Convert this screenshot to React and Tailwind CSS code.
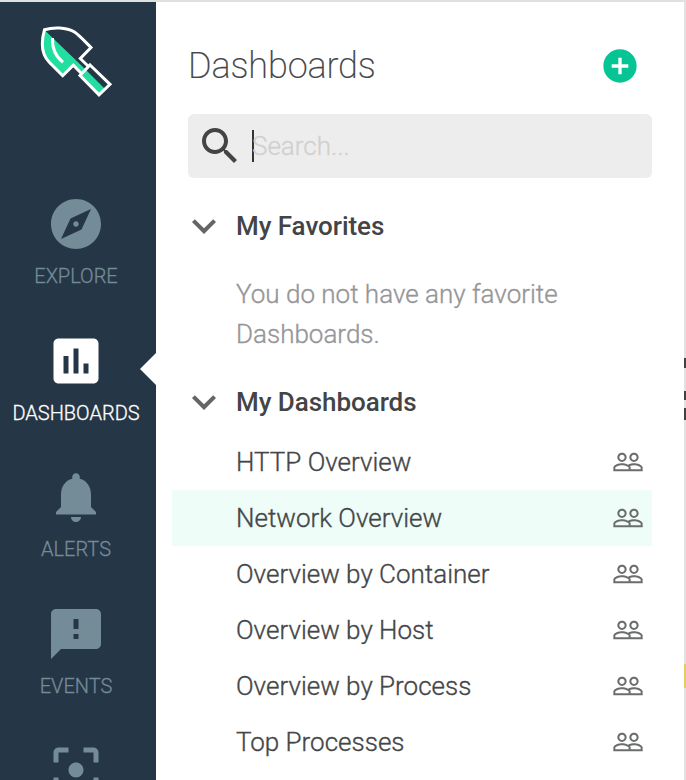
import React from 'react';

const ICONS = {
  explore:
    'M12 10.9c-.61 0-1.1.49-1.1 1.1s.49 1.1 1.1 1.1c.61 0 1.1-.49 1.1-1.1s-.49-1.1-1.1-1.1zM12 2C6.48 2 2 6.48 2 12s4.48 10 10 10 10-4.48 10-10S17.52 2 12 2zm2.19 12.19L6 18l3.81-8.19L18 6l-3.81 8.19z',
  dashboards:
    'M19 3H5c-1.1 0-2 .9-2 2v14c0 1.1.9 2 2 2h14c1.1 0 2-.9 2-2V5c0-1.1-.9-2-2-2zM9 17H7v-7h2v7zm4 0h-2V7h2v10zm4 0h-2v-4h2v4z',
  alerts:
    'M12 22c1.1 0 2-.9 2-2h-4c0 1.1.89 2 2 2zm6-6v-5c0-3.07-1.64-5.64-4.5-6.32V4c0-.83-.67-1.5-1.5-1.5s-1.5.67-1.5 1.5v.68C7.63 5.36 6 7.92 6 11v5l-2 2v1h16v-1l-2-2z',
  events:
    'M20 2H4c-1.1 0-1.99.9-1.99 2L2 22l4-4h14c1.1 0 2-.9 2-2V4c0-1.1-.9-2-2-2zm-7 12h-2v-2h2v2zm0-4h-2V6h2v4z',
  captures:
    'M5 15H3v4c0 1.1.9 2 2 2h4v-2H5v-4zM5 5h4V3H5c-1.1 0-2 .9-2 2v4h2V5zm14-2h-4v2h4v4h2V5c0-1.1-.9-2-2-2zm0 16h-4v2h4c1.1 0 2-.9 2-2v-4h-2v4zM12 9c-1.66 0-3 1.34-3 3s1.34 3 3 3 3-1.34 3-3-1.34-3-3-3z',
  search:
    'M15.5 14h-.79l-.28-.27C15.41 12.59 16 11.11 16 9.5 16 5.91 13.09 3 9.5 3S3 5.91 3 9.5 5.91 16 9.5 16c1.61 0 3.09-.59 4.23-1.57l.27.28v.79l5 4.99L20.49 19l-4.99-5zm-6 0C7.01 14 5 11.99 5 9.5S7.01 5 9.5 5 14 7.01 14 9.5 11.99 14 9.5 14z',
  chevron: 'M16.59 8.59L12 13.17 7.41 8.59 6 10l6 6 6-6z',
  add: 'M12 2C6.48 2 2 6.48 2 12s4.48 10 10 10 10-4.48 10-10S17.52 2 12 2zm5 11h-4v4h-2v-4H7v-2h4V7h2v4h4v2z',
  people:
    'M16.5 13c-1.2 0-3.07.34-4.5 1-1.43-.67-3.3-1-4.5-1C5.33 13 1 14.08 1 16.25V19h22v-2.75c0-2.17-4.33-3.25-6.5-3.25zm-4 4.5h-10v-1.25c0-.54 2.56-1.75 5-1.75s5 1.21 5 1.75v1.25zm9 0H14v-1.25c0-.46-.2-.86-.52-1.22.88-.3 1.96-.53 3.02-.53 2.44 0 5 1.21 5 1.75v1.25zM7.5 12c1.93 0 3.5-1.57 3.5-3.5S9.43 5 7.5 5 4 6.57 4 8.5 5.57 12 7.5 12zm0-5.5c1.1 0 2 .9 2 2s-.9 2-2 2-2-.9-2-2 .9-2 2-2zm9 5.5c1.93 0 3.5-1.57 3.5-3.5S18.43 5 16.5 5 13 6.57 13 8.5s1.57 3.5 3.5 3.5zm0-5.5c1.1 0 2 .9 2 2s-.9 2-2 2-2-.9-2-2 .9-2 2-2z',
};

function Icon({ name, className }) {
  return (
    <svg viewBox="0 0 24 24" fill="currentColor" className={`shrink-0 ${className}`}>
      <path d={ICONS[name]} />
    </svg>
  );
}

function Logo() {
  return (
    <svg viewBox="0 0 76 76" className="ml-[38px] size-[76px] shrink-0" fill="none">
      <path d="M6.5 6C3 18 3.5 31 11 38.5L25 52L35.5 41.5L43 49L47 45Z" fill="#22df9f" />
      <path d="M46 44L67 65L61 71L42 51.5Z" fill="#22df9f" />
      <g stroke="#fff" strokeWidth="3">
        <path d="M43.5 49.5L35.3 41.2L24.7 51.7L11.5 38.5C3 30 3 18 6.5 5.7C15 3 28 3 36.5 8C41 11 47 17.5 53 23.5L42.3 34.5L50 42" />
        <path d="M52 41L72 60.3L61 70.8L42 51.5Z" />
        <path d="M14.5 14C14 25 17 32 25 38.3" />
      </g>
    </svg>
  );
}

const NAV = [
  { icon: 'explore', label: 'EXPLORE', height: 'h-[137px]' },
  { icon: 'dashboards', label: 'DASHBOARDS', height: 'h-[136px]', active: true },
  { icon: 'alerts', label: 'ALERTS', height: 'h-[137px]' },
  { icon: 'events', label: 'EVENTS', height: 'h-[136px]' },
  { icon: 'captures', label: '', height: 'h-[137px]' },
];

const DASHBOARDS = [
  'HTTP Overview',
  'Network Overview',
  'Overview by Container',
  'Overview by Host',
  'Overview by Process',
  'Top Processes',
];

function Sidebar() {
  return (
    <nav className="relative flex w-[156px] shrink-0 flex-col overflow-hidden bg-[#253646] pt-[22px]">
      <Logo />
      <div className="mt-[94px] flex flex-col pr-1">
        {NAV.map((item) => (
          <div
            key={item.icon}
            className={`flex shrink-0 flex-col items-center ${item.height} ${item.active ? 'text-white' : 'text-[#748b98]'}`}
          >
            <Icon name={item.icon} className="size-[60px]" />
            <span className="mt-2.5 text-[20px] font-light leading-6 [-webkit-text-stroke:0.3px]">{item.label}</span>
          </div>
        ))}
      </div>
      <svg viewBox="0 0 16 32" className="absolute right-0 top-[351px] h-8 w-4">
        <path d="M16 0L0 16L16 32Z" fill="#fff" />
      </svg>
    </nav>
  );
}

function SectionHeader({ children }) {
  return (
    <h2 className="-ml-2 flex h-14 items-center text-[26px] font-medium text-[#424446]">
      <Icon name="chevron" className="size-12 text-[#636567]" />
      <span className="ml-2 tracking-[-0.05px]">{children}</span>
    </h2>
  );
}

export default function App() {
  return (
    <div className="flex h-[780px] w-[686px] flex-col overflow-hidden border-t-2 border-[#e0e0e0] bg-white font-[Roboto,sans-serif]">
      <div className="flex min-h-0 flex-1">
        <Sidebar />
        <main className="flex min-w-0 flex-1 flex-col overflow-hidden px-8">
          <header className="flex h-28 shrink-0 items-center justify-between pr-3 pt-4">
            <h1 className="text-[36px] font-extralight leading-[42px] tracking-[-0.12px] text-[#424446] [-webkit-text-stroke:0.2px]">
              Dashboards
            </h1>
            <Icon name="add" className="size-10 text-[#06c494]" />
          </header>
          <div className="flex h-16 shrink-0 items-center rounded-md bg-[#ededed] pl-2 text-[#424446]">
            <Icon name="search" className="size-12" />
            <div className="ml-2 h-8 w-0.5 bg-[#333]" />
            <span className="-ml-0.5 text-[26px] font-light text-[#d0d0d0] [-webkit-text-stroke:0.3px]">Search...</span>
          </div>
          <section className="mt-5">
            <SectionHeader>My Favorites</SectionHeader>
            <p className="ml-12 mt-5 text-[26px] font-light leading-10 text-[#959698] [-webkit-text-stroke:0.35px]">
              You do not have any favorite Dashboards.
            </p>
          </section>
          <section className="mt-5">
            <SectionHeader>My Dashboards</SectionHeader>
            <ul className="-ml-4 mt-1">
              {DASHBOARDS.map((name) => (
                <li
                  key={name}
                  className={`flex h-14 items-center justify-between pl-16 pr-2 text-[26px] font-light text-[#444648] ${name === 'Network Overview' ? 'bg-[#eefdf7]' : ''}`}
                >
                  <span className="[-webkit-text-stroke:0.35px]">{name}</span>
                  <Icon name="people" className="size-8 text-[#6b6d6e]" />
                </li>
              ))}
            </ul>
          </section>
        </main>
        <div className="flex w-0.5 shrink-0 flex-col bg-[#e2e2e2]">
          <div className="mt-[356px] h-2.5 bg-[#414141]" />
          <div className="mt-[23px] h-[9px] bg-[#414141]" />
          <div className="mt-2 h-[12px] bg-[#414141]" />
          <div className="mt-[244px] h-6 bg-[#e5cb60]" />
        </div>
      </div>
    </div>
  );
}
